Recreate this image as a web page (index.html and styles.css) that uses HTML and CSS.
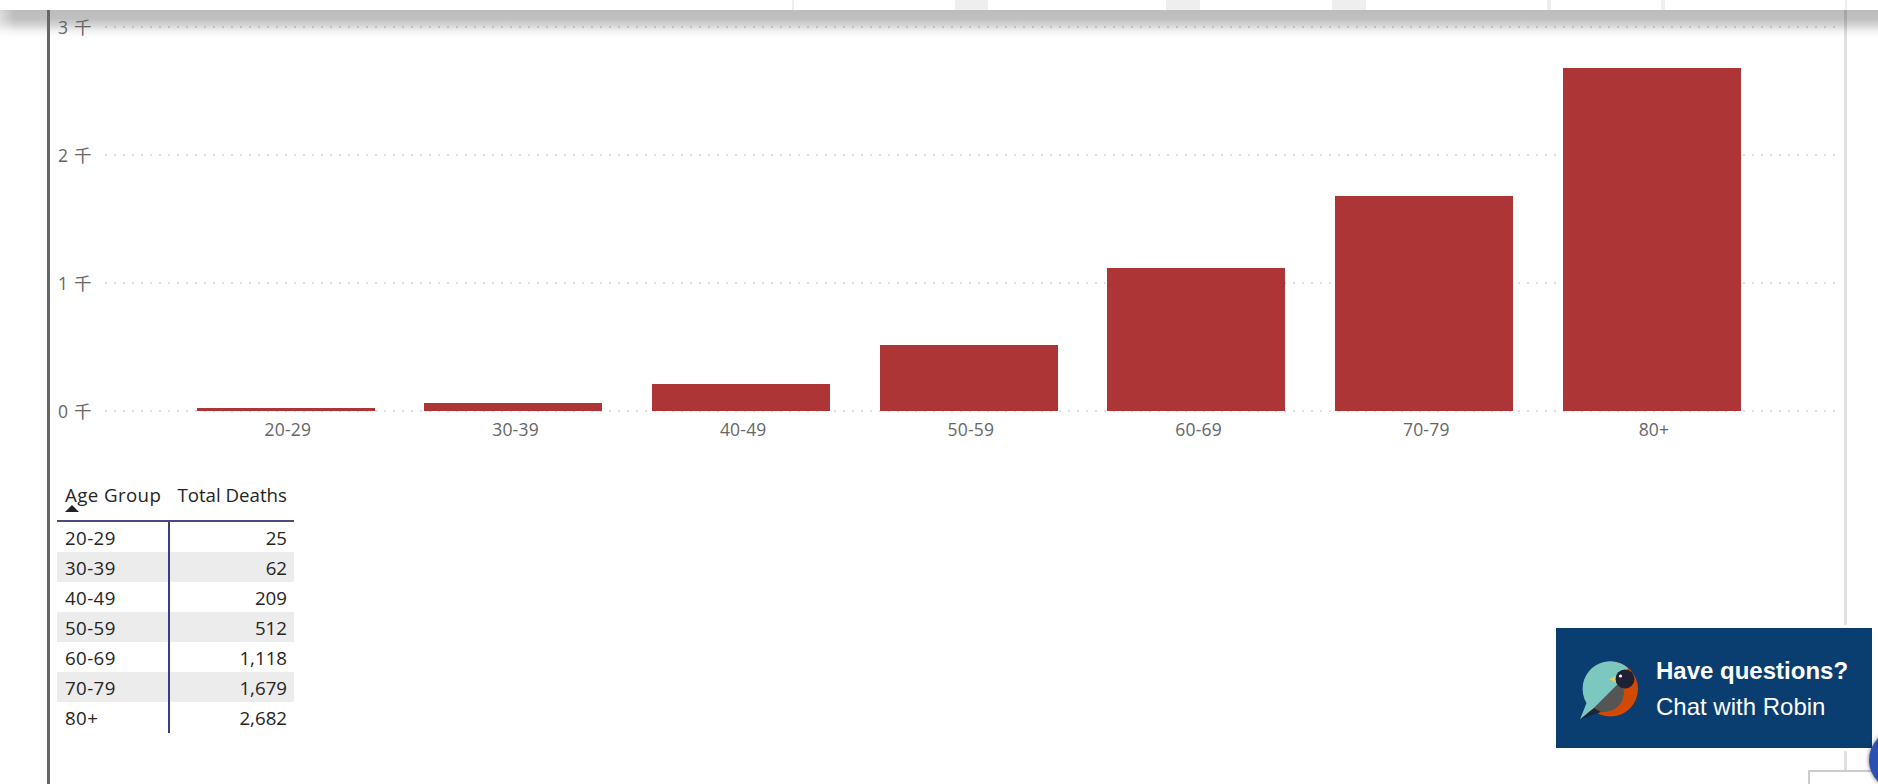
FILE: index.html
```html
<!DOCTYPE html>
<html lang="en">
<head>
<meta charset="utf-8">
<title>Deaths by age group</title>
<link rel="stylesheet" href="styles.css">
</head>
<body>
<div class="page">
  <header class="topbar">
    <span class="tab tab-a"></span>
    <span class="tab tab-b"></span>
    <span class="tab tab-c"></span>
    <span class="tab tab-d"></span>
    <span class="tab tab-e"></span>
    <span class="tab tab-f"></span>
    <span class="tab tab-g"></span>
  </header>
  <div class="shadow"></div>
  <main class="canvas">
    <section class="chart">
      <div class="plot">
        <div class="row"><span class="tick">3 千</span><i class="grid"></i></div>
        <div class="row"><span class="tick">2 千</span><i class="grid"></i></div>
        <div class="row"><span class="tick">1 千</span><i class="grid"></i></div>
        <div class="row"><span class="tick">0 千</span><i class="grid"></i></div>
        <div class="bars">
          <div class="bar" style="height:3.2px"></div>
          <div class="bar" style="height:8px"></div>
          <div class="bar" style="height:26.8px"></div>
          <div class="bar" style="height:66px"></div>
          <div class="bar" style="height:143px"></div>
          <div class="bar" style="height:215px"></div>
          <div class="bar" style="height:343px"></div>
        </div>
      </div>
      <div class="cats">
        <span>20-29</span><span>30-39</span><span>40-49</span><span>50-59</span><span>60-69</span><span>70-79</span><span>80+</span>
      </div>
    </section>
    <section class="table">
      <div class="thead">
        <div class="th th-age">Age Group<i class="sort"></i></div>
        <div class="th th-num">Total Deaths</div>
      </div>
      <div class="tr"><div class="td">20-29</div><div class="td num">25</div></div>
      <div class="tr alt"><div class="td">30-39</div><div class="td num">62</div></div>
      <div class="tr"><div class="td">40-49</div><div class="td num">209</div></div>
      <div class="tr alt"><div class="td">50-59</div><div class="td num">512</div></div>
      <div class="tr"><div class="td">60-69</div><div class="td num">1,118</div></div>
      <div class="tr alt"><div class="td">70-79</div><div class="td num">1,679</div></div>
      <div class="tr"><div class="td">80+</div><div class="td num">2,682</div></div>
    </section>
  </main>
  <aside class="chat">
    <svg class="robin" viewBox="0 0 86 100" width="86" height="100" aria-hidden="true">
      <circle cx="40.5" cy="39" r="27.5" fill="#d24a00"/>
      <path d="M10 69.5 L16.5 53 A27.5 27.5 0 0 1 58 18 L47 35 L24 58 Z" fill="#7cc8c0"/>
      <path d="M24 58 L47 35 L53 37 C57 50 47 63 31 62 Z" fill="#555"/>
      <path d="M10 69.5 L24 58 L31 62 Z" fill="#1f2538"/>
      <path d="M39 29 L47 26 L47 33 Z" fill="#f0c95c"/>
      <circle cx="55" cy="29" r="9.5" fill="#1f2033"/>
      <circle cx="50.5" cy="26" r="1.6" fill="#fff"/>
    </svg>
    <div class="chat-text">
      <strong>Have questions?</strong>
      <span>Chat with Robin</span>
    </div>
  </aside>
  <div class="fab"></div>
  <div class="corner"></div>
</div>
</body>
</html>
```
FILE: styles.css
```css
* { box-sizing: border-box; }
html, body { margin: 0; height: 100%; }
body { background: #fff; font-family: "Open Sans", "Noto Sans", "Noto Sans CJK SC", sans-serif; overflow: hidden; }
.page { position: relative; width: 1878px; height: 784px; overflow: hidden; }

.topbar { position: relative; z-index: 2; height: 10px; background: #fff; }
.tab { position: absolute; top: 0; height: 10px; background: #eeeeee; }
.tab-a { left: 792px; width: 2px; }
.tab-b { left: 955px; width: 33px; }
.tab-c { left: 1166px; width: 34px; }
.tab-d { left: 1332px; width: 34px; }
.tab-e { left: 1547px; width: 4px; }
.tab-f { left: 1661px; width: 4px; }
.tab-g { left: 1845px; width: 2px; }
.shadow {
  position: absolute; z-index: 0; left: 0; right: 0; top: 10px; height: 27px;
  background: linear-gradient(#bcbcbc 0, #c0c0c0 32%, #d4d4d4 55%, #f2f2f2 78%, #fff 100%);
  -webkit-mask-image: linear-gradient(to right, rgba(0,0,0,.55) 0, #000 14px);
  mask-image: linear-gradient(to right, rgba(0,0,0,.55) 0, #000 14px);
}

.canvas { position: relative; z-index: 1; height: 774px; margin-left: 47px; margin-right: 31px; border-left: 3px solid #666; border-right: 3px solid rgba(0,0,0,.12); }

.chart { padding-top: 16px; }
.plot { position: relative; height: 386px; display: flex; flex-direction: column; justify-content: space-between; }
.row { position: relative; display: flex; align-items: center; height: 2px; }
.tick { flex: none; width: 55px; padding-left: 8px; color: #666; font-size: 17.5px; line-height: 24px; white-space: nowrap; word-spacing: 1.5px; }
.grid { flex: 1; height: 2px; margin-right: 8px; background: repeating-linear-gradient(to right, rgba(0,0,0,.13) 0 2px, transparent 2px 9px); }
.bars { position: absolute; left: 146.7px; bottom: 1px; display: flex; align-items: flex-end; gap: 49.7px; }
.bar { width: 178px; background: #ad3535; }
.cats { display: flex; margin-left: 124px; padding-top: 5px; }
.cats span { width: 227.7px; text-align: center; color: #666; font-size: 17.5px; line-height: 24px; letter-spacing: .2px; }

.table { width: 237px; margin: 39px 0 0 7px; font-size: 18.7px; color: #252423; }
.thead { display: grid; grid-template-columns: 113px 124px; height: 42px; border-bottom: 2px solid #4a4a80; }
.th { padding: 0 7px 0 8px; line-height: 30px; white-space: nowrap; }
.th-age { position: relative; letter-spacing: .4px; }
.th-num { text-align: right; padding-left: 0; }
.sort { position: absolute; left: 8px; top: 25px; border-left: 7px solid transparent; border-right: 7px solid transparent; border-bottom: 7px solid #222; }
.tr { display: grid; grid-template-columns: 113px 124px; height: 30px; line-height: 31px; }
.tr.alt { background: #ececec; }
.td { padding: 0 7px 0 8px; }
.td:first-child { border-right: 2px solid #3d3d7a; letter-spacing: .4px; }
.num { text-align: right; }

.chat { position: absolute; z-index: 4; left: 1553px; top: 625px; width: 322px; height: 126px; border: 3px solid #fff; background: #0a3d70; display: flex; align-items: flex-start; padding: 22px 0 0 14px; color: #fff; font-family: "Liberation Sans", Arial, sans-serif; }
.robin { flex: none; }
.chat-text { display: flex; flex-direction: column; gap: 10px; margin-top: 8px; font-size: 24px; line-height: 26px; white-space: nowrap; }
.chat-text strong { font-weight: 700; }
.fab { position: absolute; z-index: 5; left: 1869px; top: 730px; width: 60px; height: 60px; border-radius: 50%; background: #2b50b2; box-shadow: 0 0 4px rgba(0,0,0,.55); }
.corner { position: absolute; z-index: 3; left: 1808px; top: 770px; width: 80px; height: 30px; border: 2px solid #ccc; background: #fff; }
```
